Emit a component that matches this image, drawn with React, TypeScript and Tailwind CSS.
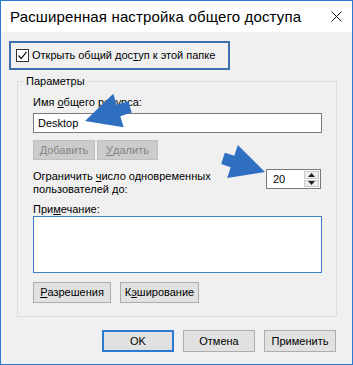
import React from 'react';

const font = { fontFamily: '"Liberation Sans", Arial, sans-serif' };

function Btn({ children, w, disabled, primary }: { children: React.ReactNode; w: string; disabled?: boolean; primary?: boolean }) {
  const base = 'flex h-full items-center justify-center text-[11px]';
  if (disabled) {
    return <div className={`${base} ${w} border border-[#bfbfbf] bg-[#cccccc] text-[#838383]`}>{children}</div>;
  }
  if (primary) {
    return <div className={`${base} ${w} border-2 border-[#2b7bd3] bg-[#e1e1e1] text-black`}>{children}</div>;
  }
  return <div className={`${base} ${w} border border-[#adadad] bg-[#e1e1e1] text-black`}>{children}</div>;
}

export default function App() {
  return (
    <div
      style={font}
      className="relative flex h-[365px] w-[353px] flex-col border border-[#2b79d0] bg-[#f0f0f0] text-[11px] text-black"
    >
      {/* title bar */}
      <div className="flex h-[31px] shrink-0 items-center justify-between bg-white pl-[9px] pr-[10px]">
        <span className="text-[15px] leading-none tracking-[0.15px]">Расширенная настройка общего доступа</span>
        <svg width="11" height="11" viewBox="0 0 11 11">
          <path d="M0.5 0.5 L10.5 10.5 M10.5 0.5 L0.5 10.5" stroke="#111" strokeWidth="1" />
        </svg>
      </div>

      {/* share checkbox */}
      <div className="ml-[8px] mt-[9px] flex h-[29px] w-[221px] items-center border-2 border-[#3c6fb0] pl-[5px]">
        <div className="flex h-[13px] w-[13px] items-center justify-center border border-[#333] bg-white">
          <svg width="11" height="11" viewBox="0 0 11 11">
            <path d="M1.5 5.5 L4.2 8.5 L9.5 1.8" fill="none" stroke="#111" strokeWidth="1.2" />
          </svg>
        </div>
        <span className="ml-[3px]">
          Открыть общий дос<span className="underline">т</span>уп к этой папке
        </span>
      </div>

      {/* parameters group */}
      <fieldset className="ml-[16px] mt-[4px] w-[320px] border border-[#dcdcdc] p-0">
        <legend className="ml-[6px] px-[2px] leading-[14px]">Параметры</legend>
        <div className="flex flex-col pb-[13px] pl-[15px] pr-[13px] pt-[7px]">
          <div className="leading-[14px]">
            Имя <span className="underline">о</span>бщего ресурса:
          </div>
          <div className="mt-[4px] flex h-[20px] w-[289px] items-center border border-[#7a7a7a] bg-white pl-[4px]">
            Desktop
          </div>
          <div className="mt-[7px] flex h-[20px] gap-[2px]">
            <Btn w="w-[62px]" disabled>
              <span className="underline">Д</span>обавить
            </Btn>
            <Btn w="w-[61px]" disabled>
              <span className="underline">У</span>далить
            </Btn>
          </div>
          <div className="mt-[9px] flex items-start justify-between">
            <div className="pt-[1px] leading-[13px]">
              Ограничить <span className="underline">ч</span>исло одновременных
              <br />
              пользователей до:
            </div>
            <div className="mr-[2px] flex h-[20px] w-[55px] items-center border border-[#7a7a7a] bg-white pl-[6px] pr-[1px]">
              <span className="flex-1">20</span>
              <div className="flex h-[16px] w-[15px] flex-col gap-[1px]">
                <div className="flex flex-1 items-center justify-center border border-[#c8c8c8] bg-[#ededed]">
                  <svg width="7" height="4" viewBox="0 0 7 4">
                    <path d="M0 4 L3.5 0 L7 4 Z" fill="#222" />
                  </svg>
                </div>
                <div className="flex flex-1 items-center justify-center border border-[#c8c8c8] bg-[#ededed]">
                  <svg width="7" height="4" viewBox="0 0 7 4">
                    <path d="M0 0 L3.5 4 L7 0 Z" fill="#222" />
                  </svg>
                </div>
              </div>
            </div>
          </div>
          <div className="mt-[7px] leading-[13px]">
            При<span className="underline">м</span>ечание:
          </div>
          <div className="h-[57px] w-[289px] border border-[#3d7fc4] bg-white" />
          <div className="mt-[9px] flex h-[21px] gap-[9px]">
            <Btn w="w-[78px]">
              <span className="underline">Р</span>азрешения
            </Btn>
            <Btn w="w-[79px]">
              К<span className="underline">э</span>ширование
            </Btn>
          </div>
        </div>
      </fieldset>

      {/* dialog buttons */}
      <div className="mr-[16px] mt-[13px] flex h-[22px] justify-end gap-[9px]">
        <Btn w="w-[72px]" primary>
          OK
        </Btn>
        <Btn w="w-[72px]">Отмена</Btn>
        <Btn w="w-[72px]">Применить</Btn>
      </div>

      {/* annotation arrows drawn over the dialog */}
      <svg className="pointer-events-none absolute left-[-1px] top-[-1px]" width="353" height="365" viewBox="0 0 353 365">
        <polygon
          points="85,121 113.3,93.8 116.7,104.8 128.1,101.2 131.7,112.6 120.3,116.2 123.7,127.2"
          fill="#2f6fc2"
        />
        <polygon
          points="265,172 237.8,145 234.3,155.8 224.8,152.7 221.2,164.1 230.7,167.2 227.2,178"
          fill="#2f6fc2"
        />
      </svg>
    </div>
  );
}
